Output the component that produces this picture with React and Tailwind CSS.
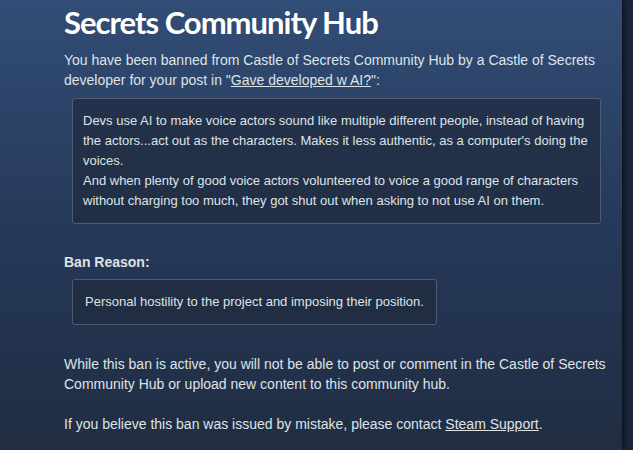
import React from "react";

export default function App() {
  return (
    <div className="flex h-[450px] w-[633px] overflow-hidden bg-[#1b2536]">
      {/* main panel */}
      <div className="h-full w-[622px] bg-gradient-to-b from-[#324d76] via-[#26395a] to-[#202d42] shadow-[2px_0_4px_rgba(0,0,0,0.5)]">
        <div className="pl-[64px] pr-[10px] text-[14px] leading-[20px] text-[#dfe3e6] [font-family:'Liberation_Sans',Arial,sans-serif]">
          <h1 className="text-[31px] font-bold leading-[44px] tracking-[-1px] text-white [font-family:Lato,sans-serif]">
            Secrets Community Hub
          </h1>

          <p className="mt-[6px] w-[540px]">
            You have been banned from Castle of Secrets Community Hub by a Castle of Secrets developer for your post in "<span className="underline">Gave developed w AI?</span>":
          </p>

          <div className="ml-[8px] mt-[8px] w-[529px] rounded-[3px] border border-[#4c5d72] bg-[#1f2b3d]/70 px-[10px] py-[12px] text-[13px]">
            <p>
              Devs use AI to make voice actors sound like multiple different people, instead of having the actors...act out as the characters. Makes it less authentic, as a computer's doing the voices.
            </p>
            <p>
              And when plenty of good voice actors volunteered to voice a good range of characters without charging too much, they got shut out when asking to not use AI on them.
            </p>
          </div>

          <h2 className="mt-[28px] font-bold">Ban Reason:</h2>

          <div className="ml-[8px] mt-[7px] inline-block rounded-[3px] border border-[#4c5d72] bg-[#1f2b3d]/70 px-[12px] pb-[12px] pt-[12px] text-[13px]">
            Personal hostility to the project and imposing their position.
          </div>

          <p className="mt-[29px]">
            While this ban is active, you will not be able to post or comment in the Castle of Secrets Community Hub or upload new content to this community hub.
          </p>

          <p className="mt-[20px]">
            If you believe this ban was issued by mistake, please contact <span className="underline">Steam Support</span>.
          </p>
        </div>
      </div>
    </div>
  );
}
